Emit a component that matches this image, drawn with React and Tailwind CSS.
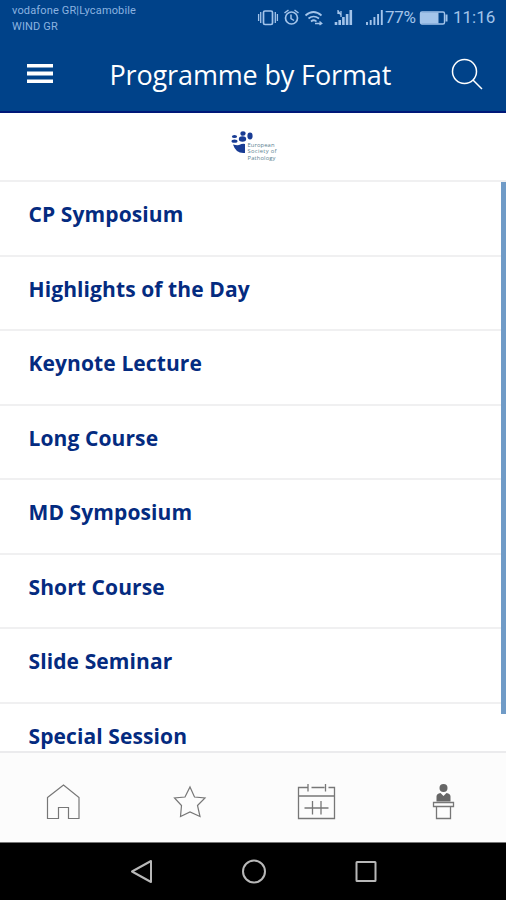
const sessions = [
  'CP Symposium',
  'Highlights of the Day',
  'Keynote Lecture',
  'Long Course',
  'MD Symposium',
  'Short Course',
  'Slide Seminar',
  'Special Session'
];

function StatusIcons() {
  return (
    <svg width="130" height="20" viewBox="256 8 130 20" fill="none" stroke="currentColor" strokeWidth="1.7">
      {/* Vibrate */}
      <rect x="263.5" y="11" width="9" height="13.5" rx="1.5" />
      <path d="M260.7 12v11M258.6 14v7M275.3 12v11M277.4 14v7" strokeWidth="1.3" />
      {/* Alarm */}
      <circle cx="291.5" cy="18" r="6" />
      <path d="M291 14.5v4l3 2M284.5 13l4-3M298.5 13l-4-3" strokeWidth="1.5" />
      {/* Wifi */}
      <path d="M305.5 15.5q8-7 16 0M308.5 18.5q5-4 10.5 0M311 21.5q3-2.5 5.5 0" />
      <path d="M315 23.5h7M319.5 21.5l2.3 2-2.3 1.5" strokeWidth="1.3" />
      {/* Signals */}
      <path d="M336 25v-3M339.7 25v-5M343.4 25v-8M347.1 25v-11M350.8 25V10" strokeWidth="2.6" />
      <path d="M338 11l3 4M341 11v6M338 10v4" strokeWidth="1.3" />
      <path d="M367 25v-3M370.7 25v-5M374.4 25v-8M378.1 25v-11M381.8 25V10" strokeWidth="1.9" />
    </svg>
  );
}

function StatusBar() {
  return (
    <div className="flex h-[36px] items-start font-['Roboto',sans-serif] text-[#a3c4ea]">
      <div className="w-[244px] shrink-0 pl-3 pt-[3px] text-[11px] leading-[15.5px] tracking-[0.15px] text-[#8bb3e0]">
        vodafone GR|Lycamobile
        <br />
        WIND GR
      </div>
      <div className="flex h-5 w-full items-center pl-3 mt-2">
        <StatusIcons />
        <span className="w-[34px] shrink-0 whitespace-nowrap text-[17px] tracking-[-0.3px] -ml-px">77%</span>
        <svg className="shrink-0" width="30" height="20" viewBox="0 0 30 20" fill="none" stroke="currentColor">
          <rect x="1.5" y="4" width="24" height="12" rx="1.5" strokeWidth="1.4" />
          <rect x="2" y="4.5" width="17.5" height="11" fill="currentColor" stroke="none" />
          <path d="M27.5 6.5v7" strokeWidth="2" />
        </svg>
        <span className="ml-1 whitespace-nowrap text-[17px]">11:16</span>
      </div>
    </div>
  );
}

function Header() {
  return (
    <header className="h-[113px] border-b-2 border-[#001878] bg-[#004289]">
      <StatusBar />
      <div className="flex h-[75px] items-center pl-[27px] pr-[22px] text-white">
        <svg width="27" height="22" viewBox="0 0 27 22" fill="currentColor">
          <path d="M0 1h26v3.5H0zM0 8.5h26v4H0zM0 16.5h26v3.5H0z" />
        </svg>
        <h1 className="ml-[55.5px] flex-1 whitespace-nowrap pt-[3px] font-['Open_Sans',sans-serif] text-[27px] tracking-[-0.14px]">
          Programme by Format
        </h1>
        <svg width="34" height="34" viewBox="0 0 34 34" fill="none" stroke="currentColor" strokeWidth="1.5">
          <circle cx="14.5" cy="14.5" r="12" />
          <path d="M23 23l9 9" />
        </svg>
      </div>
    </header>
  );
}

function Logo() {
  return (
    <svg width="50" height="34" viewBox="230 130 50 34">
      <g fill="#193c94">
        <ellipse cx="234.5" cy="136.5" rx="2.6" ry="1.5" />
        <ellipse cx="234.5" cy="141.2" rx="3" ry="1.6" />
        <ellipse cx="243" cy="133.5" rx="2.6" ry="2.3" />
        <ellipse cx="242.5" cy="139" rx="3.7" ry="2.8" />
        <ellipse cx="250" cy="136" rx="2.6" ry="3.4" />
        <path d="M233 144.5q4 1 6 .5 4-2 6-1v9q-9 1-12-8.500z" />
      </g>
      <g fill="#5b8290" fontFamily="Open Sans, sans-serif" fontSize="5.8">
        <text x="247.5" y="146.5" textLength="27">European</text>
        <text x="247.5" y="153.2" textLength="29">Society of</text>
        <text x="247.5" y="160" textLength="28">Pathology</text>
      </g>
    </svg>
  );
}

function SessionList() {
  return (
    <main className="relative h-[569px] overflow-hidden">
      <ul>
        {sessions.map((name) => (
          <li
            key={name}
            className="h-[74.5px] border-b-2 border-[#f0f0f1] pl-[28.5px] pt-[18px] font-['Open_Sans',sans-serif] text-[21px] font-bold leading-[28px] tracking-[0.1px] text-[#042b80]"
          >
            {name}
          </li>
        ))}
      </ul>
      {/* Scroll indicator */}
      <div className="absolute right-0 top-0 h-[532px] w-[5px] bg-[#709bc7]" />
    </main>
  );
}

function TabBar() {
  return (
    <nav className="grid h-[91px] grid-cols-4 place-items-center border-t-2 border-[#ebebed] bg-[#fcfcfc] pt-[9px] text-[#777]">
      <svg width="40" height="40" viewBox="43 782 40 40" fill="none" stroke="currentColor" strokeWidth="1.2">
        <path d="M47.5 797.5L63.5 785l15.5 12.500v21H68.500v-11h-10v11h-11z" />
      </svg>
      <svg width="40" height="40" viewBox="170 782 40 40" fill="none" stroke="currentColor" strokeWidth="1.2">
        <path d="M190 787l4.500 10 10.500 1-7.500 7.500 2.500 11-10-4.500-9.500 4.500 1-11-7-7.500 10.500-1z" />
      </svg>
      <svg width="40" height="40" viewBox="296.500 782 40 40" fill="none" stroke="currentColor" strokeWidth="1.3">
        <path d="M308 787.500h-9v31h36v-31h-6M312 787.500h13M299 796h36M308.500 784v7.500M326 784v7.500M305 808h24M313 801v13.500M321.500 801v13.500" />
      </svg>
      <svg width="40" height="40" viewBox="423 782 40 40" fill="none" stroke="currentColor" strokeWidth="1.3">
        <circle cx="443.5" cy="788" r="4" fill="#666" stroke="none" />
        <path d="M436.500 801.500v-5q0-3 4-3.500l3 3 3-3q4 .5 4 3.500v5z" fill="#666" stroke="none" />
        <path d="M433.500 802.500h20v4h-20zM436.500 807v11.500h14V807" />
      </svg>
    </nav>
  );
}

function SystemNav() {
  return (
    <footer className="flex h-[58px] items-center justify-center gap-[84px] border-t border-[#777] bg-black pl-px text-[#b8b8b8]">
      <svg width="28" height="28" viewBox="0 0 28 28" fill="none" stroke="currentColor" strokeWidth="2" strokeLinejoin="round">
        <path d="M4 13.5L23 3v21z" />
      </svg>
      <svg width="28" height="28" viewBox="0 0 28 28" fill="none" stroke="currentColor" strokeWidth="2">
        <circle cx="14" cy="13.5" r="11" />
      </svg>
      <svg width="28" height="28" viewBox="0 0 28 28" fill="none" stroke="currentColor" strokeWidth="2">
        <rect x="4.5" y="4" width="19" height="19" rx="0.5" />
      </svg>
    </footer>
  );
}

export default function App() {
  return (
    <div className="h-[900px] w-[506px] overflow-hidden bg-white">
      <Header />
      <div className="flex h-[69px] items-center justify-center border-b-2 border-[#f0f0f1] pl-[4px]">
        <Logo />
      </div>
      <SessionList />
      <TabBar />
      <SystemNav />
    </div>
  );
}
